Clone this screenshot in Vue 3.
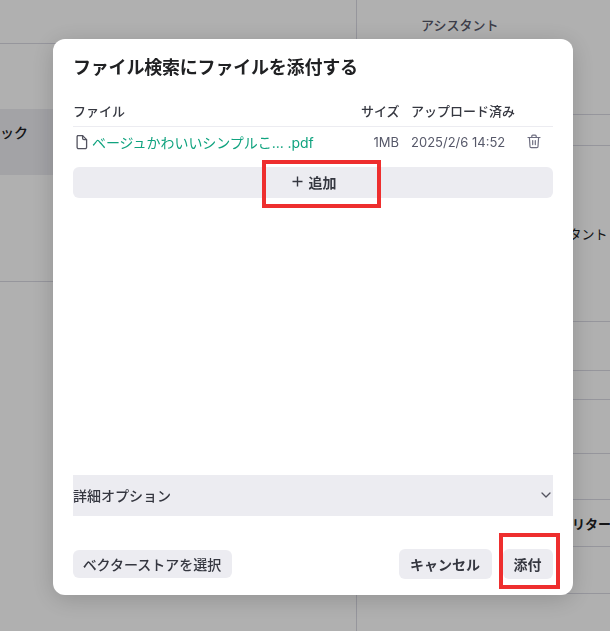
<script setup>
const leftRows = [
  { h: 65, text: "アシスタント", cls: "first" },
  { h: 66, text: "トピック", cls: "active" },
  { h: 107, text: "アシスタント", cls: "split" },
  { h: 349, text: "アシスタント", cls: "" },
];

const rightRows = [
  { h: 31, text: "" },
  { h: 176, text: "アシスタント" },
  { h: 49, text: "" },
  { h: 29, text: "" },
  { h: 54, text: "" },
  { h: 46, text: "" },
  { h: 47, text: "コードインタプリター", strong: true },
  { h: 47, text: "" },
];
</script>

<template>
  <div class="page">
    <div class="col-left">
      <div class="col-head"></div>
      <div
        v-for="(row, i) in leftRows"
        :key="i"
        class="left-row"
        :class="row.cls"
        :style="{ height: row.h + 'px' }"
      >
        {{ row.text }}
      </div>
    </div>
    <div class="col-right">
      <div class="right-head">アシスタント</div>
      <div
        v-for="(row, i) in rightRows"
        :key="i"
        class="right-row"
        :class="{ strong: row.strong }"
        :style="{ height: row.h + 'px' }"
      >
        {{ row.text }}
      </div>
    </div>
  </div>

  <div class="mask">
    <div class="modal">
      <h2 class="title">ファイル検索にファイルを添付する</h2>

      <div class="grid head">
        <span>ファイル</span>
        <span class="right">サイズ</span>
        <span>アップロード済み</span>
        <span></span>
      </div>
      <div class="grid row">
        <span class="file">
          <svg width="14" height="16" viewBox="0 0 14 16" fill="none" stroke="#53535f" stroke-width="1.3" stroke-linejoin="round">
            <path d="M2.6 1.6h5l4 4v7.6a1.5 1.5 0 0 1-1.5 1.5H3.6a1.5 1.5 0 0 1-1.5-1.5V2.6z" />
            <path d="M7.6 1.6v2.6a1.4 1.4 0 0 0 1.4 1.4h2.6" />
          </svg>
          <a class="file-name">ベージュかわいいシンプルこ... .pdf</a>
        </span>
        <span class="right">1MB</span>
        <span>2025/2/6 14:52</span>
        <span class="trash">
          <svg width="14" height="15" viewBox="0 0 14 15" fill="none" stroke="#6e6e80" stroke-width="1.2" stroke-linecap="round" stroke-linejoin="round">
            <path d="M1 3.5h12" />
            <path d="M4.8 3.3V2.2c0-.6.4-1 1-1h2.4c.6 0 1 .4 1 1v1.1" />
            <path d="M2.4 3.5l.6 9c0 .7.5 1.2 1.2 1.2h5.6c.7 0 1.2-.5 1.2-1.2l.6-9" />
            <path d="M5.7 6.6v4M8.3 6.6v4" />
          </svg>
        </span>
      </div>

      <button class="btn add">
        <svg width="11" height="11" viewBox="0 0 11 11" fill="none" stroke="#353740" stroke-width="1.4">
          <path d="M5.5 0.5v10M0.5 5.5h10" />
        </svg>
        <span>追加</span>
      </button>

      <div class="spacer"></div>

      <div class="details">
        <span>詳細オプション</span>
        <svg width="12" height="8" viewBox="0 0 12 8" fill="none" stroke="#53535f" stroke-width="1.3" stroke-linecap="round" stroke-linejoin="round">
          <path d="M2 2l4 4 4-4" />
        </svg>
      </div>

      <div class="footer">
        <button class="btn store">ベクターストアを選択</button>
        <div class="footer-right">
          <button class="btn cancel">キャンセル</button>
          <button class="btn attach">添付</button>
        </div>
      </div>

      <div class="mark mark-add"></div>
      <div class="mark mark-attach"></div>
    </div>
  </div>
</template>

<style>
html,
body {
  margin: 0;
  height: 100%;
  overflow: hidden;
}
</style>

<style scoped>
.page {
  display: flex;
  width: 610px;
  height: 631px;
  overflow: hidden;
  background: #fff;
  color: #202123;
  font-family: Inter, "Noto Sans CJK JP", sans-serif;
  font-size: 13px;
}

.col-left {
  flex: none;
  width: 357px;
  box-sizing: border-box;
  border-right: 1px solid #d9d9e3;
}

.col-head {
  height: 44px;
  box-sizing: border-box;
  border-bottom: 1px solid #d9d9e3;
}

.left-row {
  box-sizing: border-box;
  padding-top: 14px;
  line-height: 20px;
  margin-left: -76px;
}

.left-row.first {
  padding-top: 13px;
}

.left-row.split {
  border-bottom: 1px solid #d9d9e3;
}

.left-row.active {
  margin-left: 0;
  text-indent: -28px;
  background: #ececf1;
  font-size: 14px;
  font-weight: 500;
}

.col-right {
  flex: 1;
  min-width: 0;
}

.right-head {
  height: 115px;
  box-sizing: border-box;
  padding: 15px 0 0 64px;
  color: #565869;
  font-weight: 500;
  line-height: 20px;
  border-bottom: 1px solid #d9d9e3;
}

.right-row {
  box-sizing: border-box;
  display: flex;
  align-items: center;
  padding-left: 173px;
  white-space: nowrap;
  border-bottom: 1px solid #d9d9e3;
}

.right-row.strong {
  padding-left: 124px;
  font-weight: 600;
}

.mask {
  position: fixed;
  inset: 0;
  background: rgba(0, 0, 0, 0.31);
  padding: 39px 0 0 53px;
  box-sizing: border-box;
  font-family: Inter, "Noto Sans CJK JP", sans-serif;
}

.modal {
  position: relative;
  display: flex;
  flex-direction: column;
  box-sizing: border-box;
  width: 520px;
  height: 556px;
  padding: 17px 20px 16px;
  background: #fff;
  border-radius: 12px;
  box-shadow: 0 4px 24px rgba(0, 0, 0, 0.18);
  color: #353740;
}

.title {
  margin: 0;
  font-size: 18px;
  line-height: 24px;
  font-weight: 600;
  color: #202123;
  letter-spacing: -0.2px;
}

.grid {
  display: grid;
  grid-template-columns: 1fr 38px 99px 31px;
  column-gap: 12px;
  font-size: 13px;
  align-items: center;
}

.grid > span {
  white-space: nowrap;
}

.head {
  margin-top: 19px;
  height: 28px;
  padding-bottom: 4px;
  box-sizing: border-box;
  font-weight: 500;
  border-bottom: 1px solid #ececf1;
}

.row {
  height: 31px;
  box-sizing: border-box;
  padding-bottom: 2px;
  color: #565869;
}

.right {
  text-align: right;
}

.file {
  display: flex;
  align-items: center;
  gap: 3px;
  padding-left: 2px;
  min-width: 0;
}

.file-name {
  color: #10a37f;
  font-size: 14px;
  letter-spacing: -0.05px;
}

.trash {
  display: flex;
  margin-left: 5px;
}

.btn {
  border: 0;
  border-radius: 6px;
  background: #ececf1;
  color: #353740;
  font: inherit;
  font-size: 14px;
  font-weight: 600;
  padding: 0 1px 1px 0;
  cursor: pointer;
}

.add {
  display: flex;
  align-items: center;
  justify-content: center;
  gap: 6px;
  margin-top: 9px;
  height: 31px;
  width: 100%;
  padding: 0 0 2px 2px;
}

.spacer {
  flex: 1;
}

.details {
  display: flex;
  align-items: center;
  justify-content: space-between;
  height: 41px;
  box-sizing: border-box;
  padding: 0 1px 2px 0;
  background: #ececf1;
  font-size: 14px;
  font-weight: 500;
}

.footer {
  display: flex;
  align-items: center;
  justify-content: space-between;
  margin-top: 33px;
}

.footer-right {
  display: flex;
  gap: 11px;
}

.store {
  width: 159px;
  height: 28px;
  font-weight: 500;
}

.cancel {
  width: 93px;
  height: 30px;
}

.attach {
  width: 50px;
  height: 30px;
}

.mark {
  position: absolute;
  box-sizing: border-box;
  border: 4px solid #ee2e2e;
  pointer-events: none;
}

.mark-add {
  left: 209px;
  top: 121px;
  width: 119px;
  height: 48px;
}

.mark-attach {
  left: 446px;
  top: 494px;
  width: 61px;
  height: 56px;
}
</style>
